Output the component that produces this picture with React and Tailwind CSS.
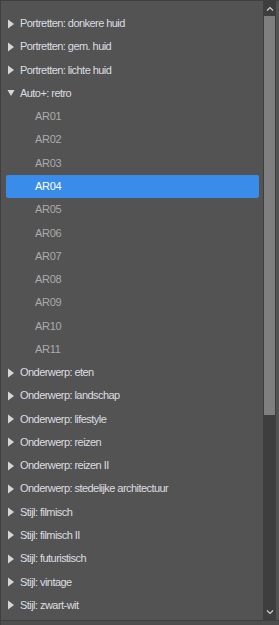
import React from 'react';

const groups = [
  { label: 'Portretten: donkere huid' },
  { label: 'Portretten: gem. huid' },
  { label: 'Portretten: lichte huid' },
  {
    label: 'Auto+: retro',
    open: true,
    children: ['AR01', 'AR02', 'AR03', 'AR04', 'AR05', 'AR06', 'AR07', 'AR08', 'AR09', 'AR10', 'AR11'],
  },
  { label: 'Onderwerp: eten' },
  { label: 'Onderwerp: landschap' },
  { label: 'Onderwerp: lifestyle' },
  { label: 'Onderwerp: reizen' },
  { label: 'Onderwerp: reizen II' },
  { label: 'Onderwerp: stedelijke architectuur' },
  { label: 'Stijl: filmisch' },
  { label: 'Stijl: filmisch II' },
  { label: 'Stijl: futuristisch' },
  { label: 'Stijl: vintage' },
  { label: 'Stijl: zwart-wit' },
];

const Caret = ({ open }) => (
  <svg width="8" height="10" viewBox="0 0 8 10" className="shrink-0">
    {open ? <path d="M0.5 2 L7.5 2 L4 8 Z" fill="#d6d6d6" /> : <path d="M1 0.5 L7 5 L1 9.5 Z" fill="#d6d6d6" />}
  </svg>
);

const Chevron = ({ up }) => (
  <svg width="8" height="5" viewBox="0 0 8 5">
    <path d={up ? 'M1 4.5 L4 1.5 L7 4.5' : 'M1 0.5 L4 3.5 L7 0.5'} fill="none" stroke="#cfcfcf" strokeWidth="1.2" />
  </svg>
);

export default function App() {
  const selected = 'AR04';
  return (
    <div className="w-[279px] h-[625px] bg-[#535353] flex flex-col overflow-hidden border-t border-l border-[#3f3f3f]" style={{ fontFamily: '"Liberation Sans", Arial, sans-serif' }}>
      <div className="flex flex-1 min-h-0">
        {/* tree list */}
        <div className="flex-1 pt-[11px] pl-[5px] pr-[4px] text-[11px] leading-none">
          {groups.map(g => (
            <React.Fragment key={g.label}>
              <div className="h-[23.28px] flex items-center gap-[5px] pl-[1px] text-[#dcdde0] tracking-[-0.55px]">
                <Caret open={g.open} />
                <span>{g.label}</span>
              </div>
              {g.children && g.children.map(c => (
                <div key={c} className={`h-[23.28px] flex items-center pl-[29px] tracking-[-0.3px] rounded-[2px] ${c === selected ? 'bg-[#3a8cea] text-white' : 'text-[#ababab]'}`}>
                  {c}
                </div>
              ))}
            </React.Fragment>
          ))}
        </div>

        {/* scrollbar */}
        <div className="w-[13px] shrink-0 flex flex-col bg-[#3e3e3e]">
          <div className="h-[15px] flex items-center justify-center"><Chevron up /></div>
          <div className="h-[399px] bg-[#7f7f7f] mx-[1px]" />
          <div className="flex-1" />
          <div className="h-[15px] flex items-center justify-center"><Chevron /></div>
        </div>
        <div className="w-[3px] shrink-0" />
      </div>
      <div className="h-[5px] shrink-0 border-t border-[#3f3f3f] bg-[#4d4d4d]" />
    </div>
  );
}
